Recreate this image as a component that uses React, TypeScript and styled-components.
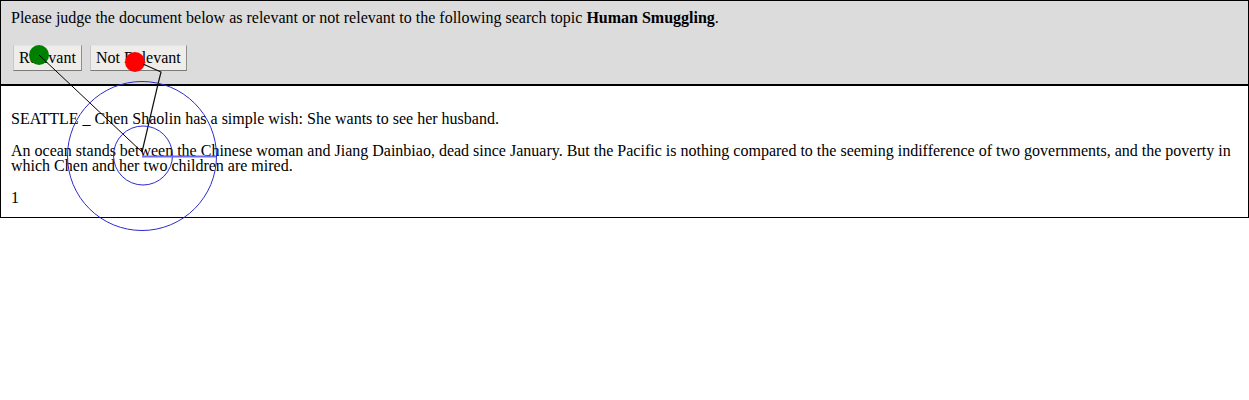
import React from "react";
import styled, { createGlobalStyle } from "styled-components";

const GlobalStyle = createGlobalStyle`
  html, body {
    margin: 0;
    padding: 0;
    background: #fff;
  }
  body {
    font-family: "Liberation Serif", "Times New Roman", serif;
    font-size: 16px;
    color: #000;
  }
  * {
    box-sizing: border-box;
  }
`;

const Page = styled.div`
  position: relative;
  width: 1249px;
  min-height: 400px;
`;

const Header = styled.div`
  background: #dcdcdc;
  border: 1px solid #000;
  padding: 9px 10px 13px;
`;

const Prompt = styled.p`
  margin: 0;
  line-height: 15px;
`;

const ButtonRow = styled.div`
  display: flex;
  gap: 4px;
  margin-top: 20px;
`;

const JudgeButton = styled.button`
  height: 26px;
  margin: 0 2px;
  padding: 0 5px;
  font-family: "Liberation Serif", "Times New Roman", serif;
  font-size: 16px;
  color: #000;
  background: #efede9;
  border: 1px solid;
  border-color: #e4e4e4 #8e8e8e #7a7a7a #c8c8c8;
  border-radius: 0;
`;

const Doc = styled.div`
  border: 1px solid #000;
  padding: 25px 10px 12px;

  p {
    margin: 0;
    line-height: 15px;
  }
  p + p {
    margin-top: 17px;
  }
`;

const Overlay = styled.svg`
  position: absolute;
  left: 0;
  top: 0;
  width: 1249px;
  height: 400px;
  overflow: visible;
  pointer-events: none;
`;

const GazeOverlay = () => (
  <Overlay width={1249} height={400} viewBox="0 0 1249 400">
    <circle cx={39} cy={55} r={10} fill="#008000" />
    <circle cx={135} cy={62} r={10} fill="#ff0000" />
    <line x1={39} y1={55} x2={142} y2={152} stroke="#000" strokeWidth={1} />
    <path
      d="M143 64 L161 72 L158.5 82 Q150 118 142 152"
      fill="none"
      stroke="#111"
      strokeWidth={1.2}
    />
    <circle cx={142} cy={156} r={74.5} fill="none" stroke="#2b2bcf" strokeWidth={1} />
    <circle cx={143} cy={155.5} r={29.5} fill="none" stroke="#2b2bcf" strokeWidth={1} />
    <line x1={142} y1={156.5} x2={216} y2={156.5} stroke="#6b6bf5" strokeWidth={2} />
  </Overlay>
);

const App: React.FC = () => {
  return (
    <>
      <GlobalStyle />
      <Page>
        <Header>
          <Prompt>
            Please judge the document below as relevant or not relevant to the following search topic{" "}
            <b>Human Smuggling</b>.
          </Prompt>
          <ButtonRow>
            <JudgeButton>Relevant</JudgeButton>
            <JudgeButton>Not Relevant</JudgeButton>
          </ButtonRow>
        </Header>
        <Doc>
          <p>SEATTLE _ Chen Shaolin has a simple wish: She wants to see her husband.</p>
          <p>
            An ocean stands between the Chinese woman and Jiang Dainbiao, dead since January. But the Pacific is
            nothing compared to the seeming indifference of two governments, and the poverty in which Chen and her
            two children are mired.
          </p>
          <p>1</p>
        </Doc>
        <GazeOverlay />
      </Page>
    </>
  );
};

export default App;
